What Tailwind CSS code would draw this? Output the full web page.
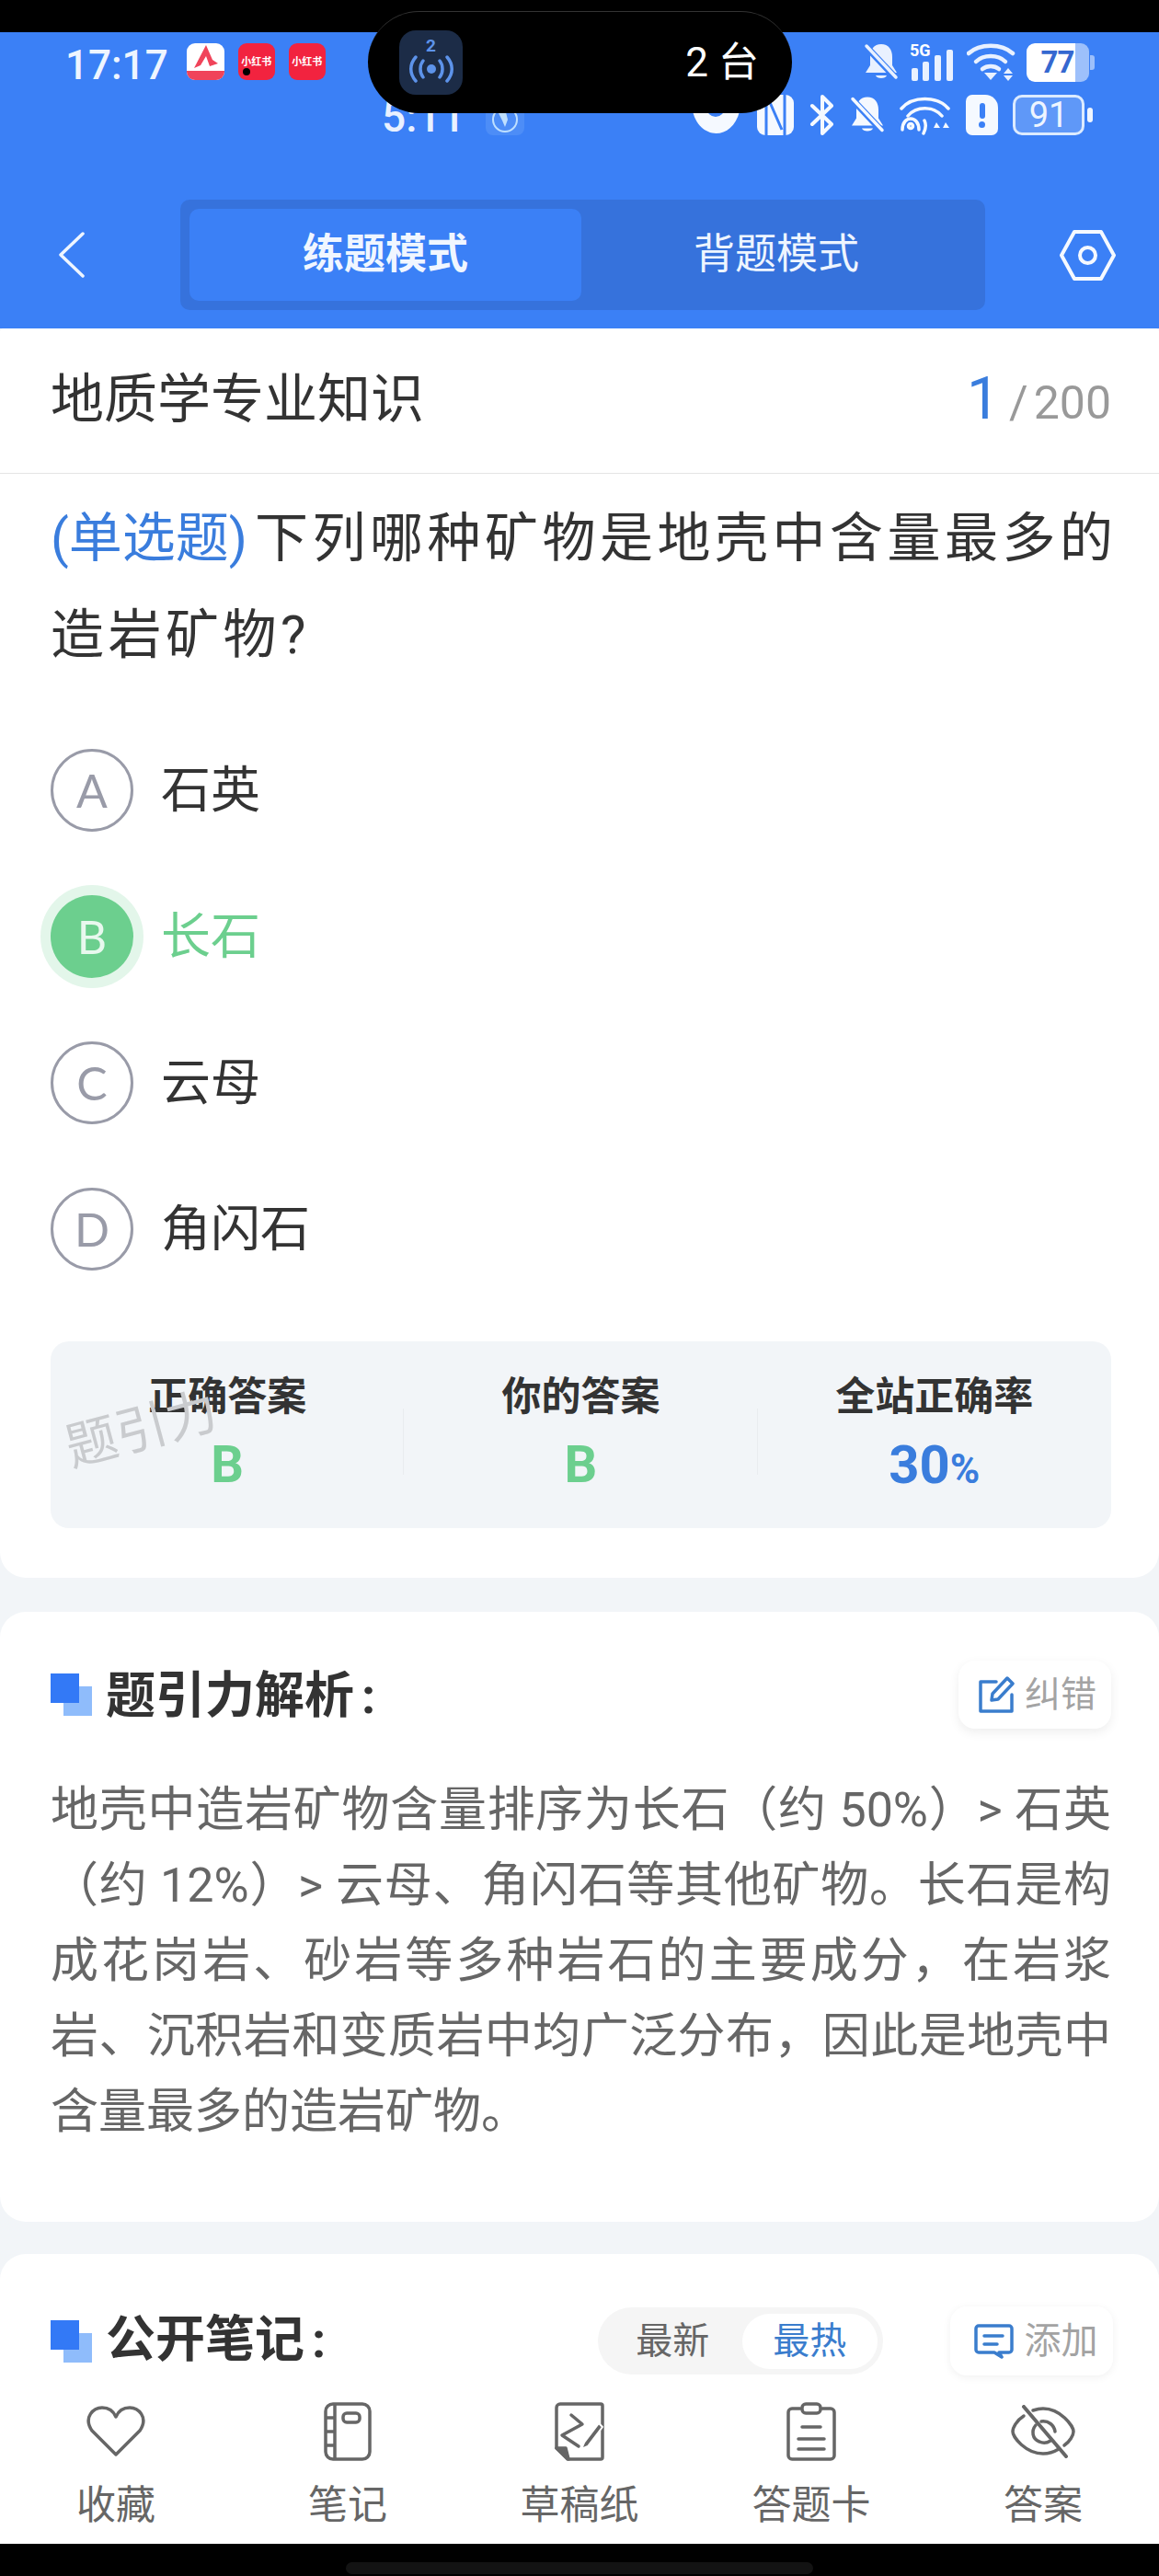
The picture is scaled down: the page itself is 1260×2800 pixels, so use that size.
<!DOCTYPE html>
<html lang="zh-CN">
<head>
    <meta charset="UTF-8">
    <meta name="viewport" content="width=device-width, initial-scale=1.0">
    <title>练题模式</title>
    <script src="https://cdn.jsdelivr.net/npm/@tailwindcss/browser@4"></script>
</head>
<body class="bg-[#f2f5f8] font-['Roboto','Noto_Sans_CJK_SC',sans-serif]">
<div class="relative w-[1260px] h-[2800px] overflow-hidden flex flex-col">
    <div class="h-[35px] bg-black shrink-0"></div>

    <!-- Blue header with status bar -->
    <header class="relative h-[322px] shrink-0 bg-[#3b80f6] text-white">
        <div class="flex justify-between pl-[71px] pr-[70px] pt-[12px] h-[182px]">
            <div class="flex items-start gap-[15px]">
                <span class="text-[44px] leading-[48px] font-medium mr-[5px] text-[#eef5ff]">17:17</span>
                <div class="relative w-[41px] h-[40px] rounded-[9px] bg-white overflow-hidden">
                    <svg viewBox="0 0 41 40" class="w-full h-full"><path d="M21 2 L8 27 L15 24 L21 14 L25 25 L34 22 L28 18 Z" fill="#f0445a"/><rect y="30" width="41" height="10" fill="#f0445a"/></svg>
                </div>
                <div class="relative w-[40px] h-[40px] rounded-[9px] bg-[#f2233f] flex items-center justify-center text-[11px] font-bold leading-none">小红书<span class="absolute left-[5px] bottom-[5px] w-[8px] h-[8px] rounded-full bg-black"></span></div>
                <div class="w-[40px] h-[40px] rounded-[9px] bg-[#f2233f] flex items-center justify-center text-[11px] font-bold leading-none">小红书</div>
            </div>
            <div class="flex items-start gap-[12px]">
                <svg viewBox="0 0 38 41" class="w-[38px] h-[41px]"><path d="M19 1c8 0 12 6 12 14v9l5 8H2l5-8v-9C7 7 11 1 19 1zM13 35h12c-1 4-11 4-12 0z" fill="#e9f1ff"/><path d="M3 4l32 34" stroke="#3b80f6" stroke-width="7"/><path d="M3 3l32 34" stroke="#e9f1ff" stroke-width="3.5" stroke-linecap="round"/></svg>
                <div class="relative w-[50px] h-[41px]">
                    <span class="absolute left-0 -top-[2px] text-[18px] leading-[20px] font-bold">5G</span>
                    <span class="absolute left-[2px] bottom-0 w-[7px] h-[14px] rounded-[2px] bg-[#e9f1ff]"></span>
                    <span class="absolute left-[14px] bottom-0 w-[7px] h-[21px] rounded-[2px] bg-[#e9f1ff]"></span>
                    <span class="absolute left-[27px] bottom-0 w-[7px] h-[28px] rounded-[2px] bg-[#e9f1ff]"></span>
                    <span class="absolute left-[40px] bottom-0 w-[7px] h-[34px] rounded-[2px] bg-[#e9f1ff]"></span>
                </div>
                <svg viewBox="0 0 53 41" class="w-[53px] h-[41px]" fill="none" stroke="#e9f1ff" stroke-width="4.5" stroke-linecap="round"><path d="M2 11C14 0 38 0 50 11"/><path d="M10 20C18 12 34 12 42 20"/><path d="M17 28C22 24 30 24 35 28" /><path d="M19 32h14l-7 8z" fill="#e9f1ff" stroke="none"/><path d="M45 27l5 6h-10zM45 41l5-6h-10z" fill="#e9f1ff" stroke="none"/></svg>
                <div class="relative flex items-center">
                    <div class="w-[68px] h-[42px] rounded-[9px] bg-white/50 overflow-hidden">
                        <div class="w-[53px] h-full bg-white rounded-l-[9px] flex items-center justify-center text-[#3568d0] text-[33px] font-bold tracking-[-1px] pl-[14px]">77</div>
                    </div>
                    <span class="w-[5px] h-[16px] rounded-r-[3px] bg-white/50 ml-[1px]"></span>
                </div>
            </div>
        </div>

        <!-- Second status row, shows through behind the island -->
        <div class="absolute left-[415px] top-[70px] text-[46px] leading-[44px] font-medium text-[#e9f1ff]">5:11</div>
        <svg class="absolute left-[528px] top-[78px] w-[42px] h-[34px]" viewBox="0 0 42 34"><rect width="42" height="34" rx="8" fill="#4d8df7"/><circle cx="21" cy="17" r="13" fill="none" stroke="#bfe0ff" stroke-width="2"/><path d="M14 10l8-1 2 8-3 8-3-7z" fill="#bfe0ff"/></svg>
        <svg class="absolute left-[751px] top-[68px] w-[55px] h-[44px]" viewBox="0 0 55 44"><path d="M2 18C12 -2 43 -2 53 18C45 50 10 50 2 18z" fill="#f5f9ff"/><circle cx="27" cy="14" r="10" fill="#3b80f6"/></svg>
        <svg class="absolute left-[823px] top-[68px] w-[40px] h-[44px]" viewBox="0 0 40 44"><rect width="40" height="44" rx="9" fill="#f5f9ff"/><path d="M10 0v44M30 0v44M13 6l14 32" stroke="#3b80f6" stroke-width="3" fill="none"/></svg>
        <svg class="absolute left-[880px] top-[68px] w-[28px] h-[44px]" viewBox="0 0 28 44" fill="none" stroke="#f5f9ff" stroke-width="4" stroke-linecap="round" stroke-linejoin="round"><path d="M3 12l21 20-10 10V2l10 10L3 32"/></svg>
        <svg class="absolute left-[924px] top-[68px] w-[38px] h-[44px]" viewBox="0 0 38 41"><path d="M19 1c8 0 12 6 12 14v9l5 8H2l5-8v-9C7 7 11 1 19 1zM13 35h12c-1 4-11 4-12 0z" fill="#f5f9ff"/><path d="M3 4l32 34" stroke="#3b80f6" stroke-width="7"/><path d="M3 3l32 34" stroke="#f5f9ff" stroke-width="3.5" stroke-linecap="round"/></svg>
        <svg class="absolute left-[978px] top-[68px] w-[55px] h-[44px]" viewBox="0 0 55 44" fill="none" stroke="#f5f9ff" stroke-width="3.5" stroke-linecap="round"><path d="M2 15C14 1 41 1 53 15"/><path d="M9 23C18 12 37 12 46 23"/><circle cx="12" cy="34" r="2.5"/><path d="M3 38C3 22 21 22 21 38"/><path d="M26 42C29 36 29 32 27 28"/><path d="M40 30l-3 6h7zM50 30l-3 6h7z" fill="#f5f9ff" stroke="none"/></svg>
        <div class="absolute left-[1050px] top-[68px] w-[35px] h-[44px] rounded-[7px] rounded-tr-[14px] bg-[#f5f9ff] flex flex-col items-center justify-center gap-[3px]"><span class="w-[6px] h-[17px] bg-[#3b80f6] rounded-full"></span><span class="w-[7px] h-[7px] bg-[#3b80f6] rounded-full"></span></div>
        <div class="absolute left-[1101px] top-[68px] flex items-center">
            <div class="w-[78px] h-[44px] rounded-[10px] border-[3px] border-[#dcebff] bg-[#5f98f8] flex items-center justify-center text-[38px] text-[#eef5ff] leading-none">91</div>
            <span class="ml-[3px] w-[6px] h-[16px] rounded-full bg-[#eef5ff]"></span>
        </div>

        <!-- Mode switch row -->
        <div class="flex items-center h-[120px] pl-[64px] pr-[47px]">
            <svg viewBox="0 0 28 50" class="w-[28px] h-[50px]" fill="none" stroke="#eef5ff" stroke-width="3.5" stroke-linecap="round" stroke-linejoin="round"><path d="M26 2L2 25l24 23"/></svg>
            <div class="ml-[104px] w-[875px] h-[120px] rounded-[10px] bg-[#3672dc] p-[10px] flex">
                <button class="w-[426px] rounded-[10px] bg-[#3b80f6] text-[45px] font-bold text-[#f0f6ff]">练题模式</button>
                <button class="flex-1 text-[45px] text-[#eef5ff] pr-[5px]">背题模式</button>
            </div>
            <svg viewBox="0 0 61 55" class="ml-auto w-[61px] h-[55px]" fill="none" stroke="#f5f9ff" stroke-width="4" stroke-linejoin="round"><path d="M16 2h29l14 25.500-14 25.500H16L2 27.500z"/><circle cx="30.500" cy="27.500" r="8.500"/></svg>
        </div>
    </header>

    <!-- Title row -->
    <div class="h-[159px] shrink-0 bg-white border-b-2 border-[#e4e4e4] rounded-t-[4px] flex items-center justify-between pl-[55px] pr-[52px] pb-[3px]">
        <h1 class="text-[58px] text-[#333] leading-none">地质学专业知识</h1>
        <div class="flex items-baseline text-[#999]">
            <span class="text-[64px] leading-none text-[#3a7ddd]">1</span>
            <span class="text-[50px] leading-none ml-[10px]">/<span class="ml-[6px]">200</span></span>
        </div>
    </div>

    <!-- Question card -->
    <section class="h-[1200px] -mt-px shrink-0 bg-white rounded-b-[28px] px-[55px] pt-[18px]">
        <p class="w-[1165px] text-[58px] leading-[105px] text-[#333] tracking-[4.5px]"><span class="text-[#3a7ddd] tracking-normal mr-[8px]">(单选题)</span>下列哪种矿物是地壳中含量最多的造岩矿物?</p>
        <div class="mt-[71px]">
            <div class="flex items-center h-[90px] gap-[30px]">
                <span class="w-[90px] h-[90px] rounded-full border-[3px] border-[#999ba8] flex items-center justify-center text-[50px] font-['Lato'] text-[#999ba8]">A</span>
                <span class="text-[54px] text-[#333]">石英</span>
            </div>
            <div class="flex items-center h-[90px] gap-[30px] mt-[69px]">
                <span class="w-[90px] h-[90px] rounded-full bg-[#6ccf8e] ring-[11px] ring-[#e3f6ea] flex items-center justify-center text-[50px] font-['Lato'] text-[#e8f8ee]">B</span>
                <span class="text-[54px] text-[#6ccf8e]">长石</span>
            </div>
            <div class="flex items-center h-[90px] gap-[30px] mt-[69px]">
                <span class="w-[90px] h-[90px] rounded-full border-[3px] border-[#999ba8] flex items-center justify-center text-[50px] font-['Lato'] text-[#999ba8]">C</span>
                <span class="text-[54px] text-[#333]">云母</span>
            </div>
            <div class="flex items-center h-[90px] gap-[30px] mt-[69px]">
                <span class="w-[90px] h-[90px] rounded-full border-[3px] border-[#999ba8] flex items-center justify-center text-[50px] font-['Lato'] text-[#999ba8]">D</span>
                <span class="text-[54px] text-[#333]">角闪石</span>
            </div>
        </div>

        <div class="relative mt-[77px] w-[1153px] h-[203px] rounded-[20px] bg-[#f2f5f8] grid grid-cols-3 pt-[30px]">
            <div class="relative text-center">
                <div class="text-[43px] leading-[60px] font-bold text-[#333]">正确答案</div>
                <div class="mt-[14px] text-[56px] leading-[60px] font-bold text-[#6ccf8e]">B</div>
                <span class="absolute right-0 top-[43px] w-px h-[72px] bg-[#e9ecef]"></span>
            </div>
            <div class="relative text-center">
                <div class="text-[43px] leading-[60px] font-bold text-[#333]">你的答案</div>
                <div class="mt-[14px] text-[56px] leading-[60px] font-bold text-[#6ccf8e]">B</div>
                <span class="absolute right-0 top-[43px] w-px h-[72px] bg-[#e9ecef]"></span>
            </div>
            <div class="text-center">
                <div class="text-[43px] leading-[60px] font-bold text-[#333]">全站正确率</div>
                <div class="mt-[14px] text-[58px] leading-[60px] font-bold text-[#3a7ddd]">30<span class="text-[44px]">%</span></div>
            </div>
            <span class="absolute left-[15px] top-[68px] -rotate-[15deg] text-[56px] leading-none text-[#c9cbce]">题引力</span>
        </div>
    </section>

    <!-- Analysis card -->
    <section class="mt-[37px] h-[663px] shrink-0 bg-white rounded-[28px] pl-[55px] pr-[52px] pt-[53px]">
        <div class="flex items-center justify-between h-[74px]">
            <div class="flex items-center">
                <span class="relative w-[45px] h-[46px]"><span class="absolute right-0 bottom-0 w-[31px] h-[32px] bg-[#8fbcfb]"></span><span class="absolute left-0 top-0 w-[31px] h-[32px] bg-[#3379f6]"></span></span>
                <h2 class="ml-[15px] mt-[2px] text-[54px] font-bold text-[#333]">题引力解析<span class="ml-[8px]">:</span></h2>
            </div>
            <button class="w-[166px] h-[74px] rounded-[18px] bg-white shadow-[0_4px_12px_rgba(0,0,0,0.07)] flex items-center justify-center gap-[10px] pl-[6px] text-[39px] text-[#a3a3a3]">
                <svg viewBox="0 0 40 40" class="w-[40px] h-[40px]" fill="none" stroke="#3a7dcd" stroke-width="3.500" stroke-linejoin="round" stroke-linecap="round"><path d="M19 6H2v32h34V20"/><path d="M14 26l1-7L31 2l6 6-16 17z"/></svg>
                纠错
            </button>
        </div>
        <p class="mt-[48px] text-[52px] leading-[82px] text-[#666] text-justify">地壳中造岩矿物含量排序为长石（约 50%）> 石英（约 12%）> 云母、角闪石等其他矿物。长石是构成花岗岩、砂岩等多种岩石的主要成分，在岩浆岩、沉积岩和变质岩中均广泛分布，因此是地壳中含量最多的造岩矿物。</p>
    </section>

    <!-- Public notes card -->
    <section class="mt-[35px] h-[150px] shrink-0 bg-white rounded-t-[28px] pl-[55px] pr-[50px] pt-[57px]">
        <div class="flex items-center h-[75px]">
            <span class="relative w-[45px] h-[46px]"><span class="absolute right-0 bottom-0 w-[31px] h-[32px] bg-[#8fbcfb]"></span><span class="absolute left-0 top-0 w-[31px] h-[32px] bg-[#3379f6]"></span></span>
            <h2 class="ml-[15px] mb-[3px] text-[54px] font-bold text-[#333]">公开笔记<span class="ml-[8px]">:</span></h2>
            <div class="ml-auto w-[310px] h-[73px] rounded-full bg-[#f5f5f5] flex items-center p-[6px] text-[40px]">
                <span class="w-[151px] text-center text-[#666]">最新</span>
                <span class="w-[148px] h-[60px] leading-[60px] rounded-full bg-white text-center text-[#3a7dcd]">最热</span>
            </div>
            <button class="ml-[73px] w-[177px] h-[75px] rounded-[18px] bg-white shadow-[0_2px_10px_rgba(0,0,0,0.06)] flex items-center justify-center gap-[12px] pl-[9px] text-[40px] text-[#a3a3a3]">
                <svg viewBox="0 0 43 38" class="w-[43px] h-[38px]" fill="none" stroke="#3a7dcd" stroke-width="3.500" stroke-linecap="round" stroke-linejoin="round"><path d="M5 2h33a3 3 0 0 1 3 3v23a3 3 0 0 1-3 3h-8l-3 0 3 5-8-5H5a3 3 0 0 1-3-3V5a3 3 0 0 1 3-3z"/><path d="M11 13h20M11 22h14"/></svg>
                添加
            </button>
        </div>
    </section>

    <!-- Bottom nav -->
    <nav class="h-[165px] shrink-0 bg-white grid grid-cols-5 text-[#666]">
        <div class="flex flex-col items-center pt-[11px]">
            <div class="h-[64px] flex items-center">
                <svg viewBox="0 0 64 56" class="w-[64px] h-[56px]" fill="none" stroke="#666" stroke-width="3.500" stroke-linejoin="round"><path d="M32 53L6 27C-4 12 8 2 17 2c7 0 12 3 15 10C35 5 40 2 47 2c9 0 21 10 11 25z"/></svg>
            </div>
            <span class="mt-[23px] text-[43px] leading-[50px]">收藏</span>
        </div>
        <div class="flex flex-col items-center pt-[11px]">
            <svg viewBox="0 0 52 64" class="w-[52px] h-[64px]" fill="none" stroke="#666" stroke-width="3.500" stroke-linejoin="round"><rect x="2" y="2" width="48" height="60" rx="8"/><path d="M12 2v60M2 17h10M2 32h10M2 47h10"/><rect x="21" y="12" width="18" height="10" rx="4"/></svg>
            <span class="mt-[23px] text-[43px] leading-[50px]">笔记</span>
        </div>
        <div class="flex flex-col items-center pt-[11px]">
            <svg viewBox="0 0 54 64" class="w-[54px] h-[64px]" fill="none" stroke="#666" stroke-width="3.500" stroke-linejoin="round" stroke-linecap="round"><path d="M6 2h44a2 2 0 0 1 2 2v56a2 2 0 0 1-2 2H14L2 50V6a4 4 0 0 1 4-4z"/><path d="M2 50h10l3 12z" fill="#666"/><path d="M18 14l12 10-22 12 18 12"/><path d="M48 23L32 44l-3 7 7-3 16-21z" fill="#666" stroke="#fff" stroke-width="2"/></svg>
            <span class="mt-[23px] text-[43px] leading-[50px]">草稿纸</span>
        </div>
        <div class="flex flex-col items-center pt-[11px]">
            <svg viewBox="0 0 54 64" class="w-[54px] h-[64px]" fill="none" stroke="#666" stroke-width="3.500" stroke-linejoin="round" stroke-linecap="round"><path d="M15 7H6a4 4 0 0 0-4 4v47a4 4 0 0 0 4 4h42a4 4 0 0 0 4-4V11a4 4 0 0 0-4-4h-9"/><rect x="17" y="2" width="20" height="10" rx="4"/><path d="M17 27h20M13 40h28M13 51h28"/></svg>
            <span class="mt-[23px] text-[43px] leading-[50px]">答题卡</span>
        </div>
        <div class="flex flex-col items-center pt-[11px]">
            <div class="h-[64px] flex items-center">
                <svg viewBox="0 0 70 58" class="w-[70px] h-[58px]" fill="none" stroke="#666" stroke-width="3.500" stroke-linecap="round" stroke-linejoin="round"><path d="M14 12C6 17 2 25 2 29c0 6 14 24 33 24 7 0 12-2 17-5"/><path d="M24 6c3-1 7-2 11-2 19 0 33 19 33 25 0 4-4 11-10 15"/><path d="M27 22c-5 6-4 15 4 18 4 2 9 1 12-1"/><path d="M33 18c8-1 14 4 15 11"/><path d="M14 2l46 54" stroke-width="4"/></svg>
            </div>
            <span class="mt-[23px] text-[43px] leading-[50px]">答案</span>
        </div>
    </nav>

    <footer class="h-[35px] shrink-0 bg-black pt-[20px] flex justify-center">
        <div class="w-[508px] h-[13px] rounded-full bg-[#131313]"></div>
    </footer>

    <!-- Dynamic island -->
    <div class="absolute left-[400px] top-[12px] w-[461px] h-[111px] rounded-full bg-black border-t border-[#333] flex items-center justify-between pl-[34px] pr-[36px]">
        <div class="w-[69px] h-[70px] rounded-[18px] bg-[#1c2c47] flex flex-col items-center text-[#5d93ea]">
            <span class="text-[19px] leading-[20px] font-bold mt-[7px]">2</span>
            <svg viewBox="0 0 50 30" class="w-[50px] h-[30px]" fill="none" stroke="#5d93ea" stroke-width="3.500" stroke-linecap="round"><circle cx="25" cy="15" r="5" fill="#5d93ea" stroke="none"/><path d="M16 6c-4 5-4 13 0 18M34 6c4 5 4 13 0 18M8 2c-7 8-7 18 0 26M42 2c7 8 7 18 0 26"/></svg>
        </div>
        <span class="text-[44px] text-white">2 台</span>
    </div>
</div>
</body>
</html>
